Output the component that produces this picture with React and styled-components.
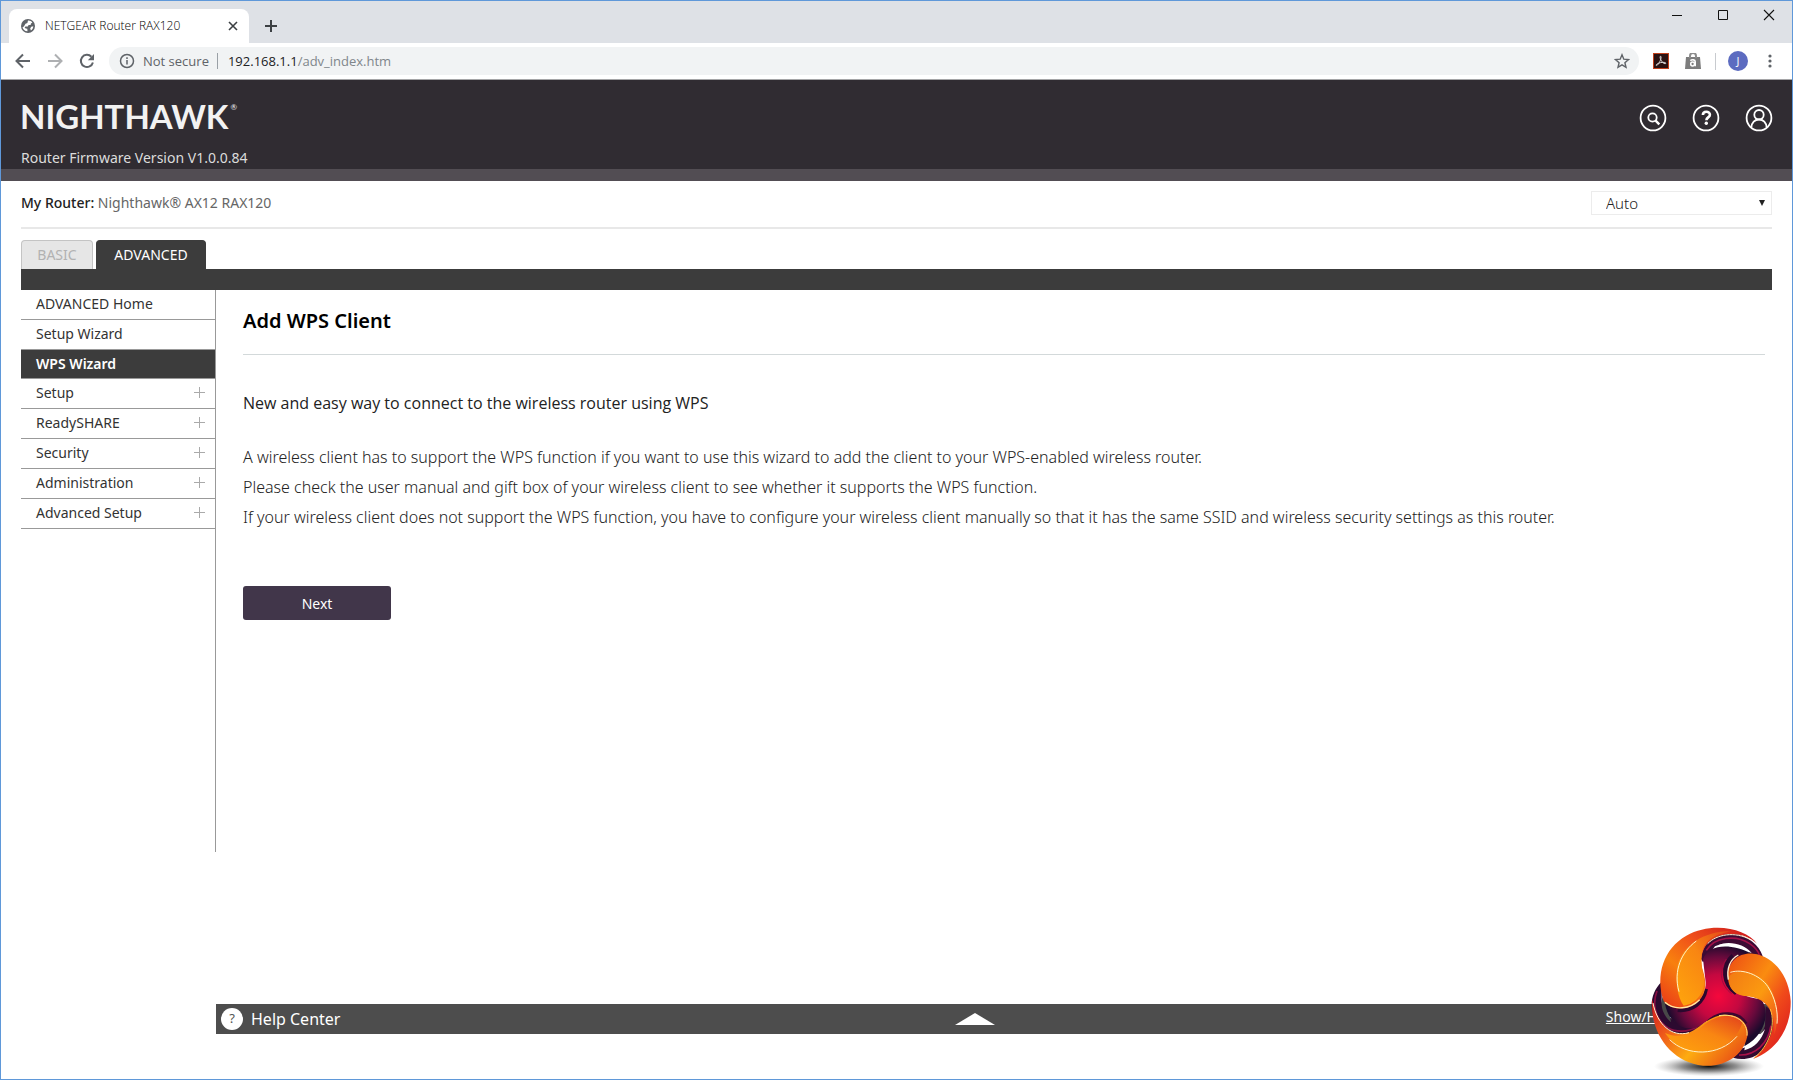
import React from "react";
import styled, { createGlobalStyle } from "styled-components";

const GlobalStyle = createGlobalStyle`
	* { box-sizing: border-box; }
	body { margin: 0; }
	button, select, input { font-family: inherit; }
	svg { display: block; flex: none; }
`

const Window = styled.div`
	position: relative;
	display: flex;
	flex-direction: column;
	min-height: 100vh;
	border: 1px solid #5f98d9;
	background: #fff;
	color: #333;
	font-family: "Noto Sans", sans-serif;
	font-size: 14px;
	overflow: hidden;
`

/* browser frame */
const TabStrip = styled.div`
	display: flex;
	height: 42px;
	padding: 8px 0 0 8px;
	background: #dee1e6;
`
const BrowserTab = styled.div`
	display: flex;
	align-items: center;
	width: 240px;
	padding: 0 11px;
	border-radius: 8px 8px 0 0;
	background: #fff;
	color: #3c4043;
	font-family: "Open Sans", sans-serif;
	font-size: 12px;
	font-weight: 300;
`
const TabTitle = styled.span`
	flex: 1;
	padding: 0 0 2px 9px;
	color: #000;
`
const IconButton = styled.button`
	display: flex;
	align-items: center;
	justify-content: center;
	width: ${p => p.$size || 16}px;
	height: ${p => p.$size || 16}px;
	padding: 0;
	border: none;
	background: none;
	color: inherit;
`
const NewTab = styled(IconButton)`
	width: 28px;
	height: 34px;
	margin-left: 8px;
	color: #3c4043;
`
const WindowButtons = styled.div`
	display: flex;
	gap: 30px;
	height: 16px;
	margin: -2px 15px 0 auto;
	color: #111;
`
const Toolbar = styled.div`
	display: flex;
	align-items: center;
	height: 37px;
	padding: 0 14px 0 13px;
	border-bottom: 1px solid #a5a5a7;
	color: #5f6368;
`
const NavButtons = styled.div`
	display: flex;
	gap: 14px;
	margin-right: 13px;
`
const AddressBar = styled.div`
	display: flex;
	flex: 1;
	align-items: center;
	height: 28px;
	padding: 0 9px 0 10px;
	border-radius: 14px;
	background: #f1f3f4;
	font-family: "Open Sans", sans-serif;
	font-size: 13px;
`
const NotSecure = styled.span`
	padding: 0 8px;
	border-right: 1px solid #9aa0a6;
	line-height: 16px;
`
const Address = styled.span`
	flex: 1;
	padding-left: 10px;
	color: #80868b;

	b {
		color: #202124;
		font-weight: 400;
	}
`
const Extensions = styled.div`
	display: flex;
	align-items: center;
	gap: 16px;
	padding: 0 12px 0 14px;
`
const Separator = styled.span`
	width: 1px;
	height: 17px;
	margin-left: -2px;
	background: #c8cbcf;
`
const Avatar = styled.button`
	width: 20px;
	height: 20px;
	margin-right: 14px;
	padding: 0;
	border: none;
	border-radius: 50%;
	background: #5c6bc0;
	color: #fff;
	font-family: "Open Sans", sans-serif;
	font-size: 11px;
	line-height: 20px;
`

/* router page */
const Header = styled.header`
	display: flex;
	justify-content: space-between;
	padding: 16px 19px 0 20px;
	height: 101px;
	border-bottom: 12px solid #524d53;
	background: #302c32;
`
const Logo = styled.div`
	display: flex;
	margin-left: -1px;
	color: #f2f2f2;
	font-family: Lato, sans-serif;
	font-size: 33px;
	font-weight: 700;
	line-height: 40px;

	sup {
		margin-left: 2px;
		font-size: 8px;
		font-weight: 400;
		line-height: 22px;
	}
`
const Firmware = styled.div`
	margin-top: 12px;
	color: #dcdcdc;
	line-height: 20px;
`
const HeaderIcons = styled.nav`
	display: flex;
	gap: 25px;
	padding-top: 8px;
	color: #fff;
`
const RouterBar = styled.div`
	display: flex;
	align-items: center;
	justify-content: space-between;
	height: 48px;
	margin: 0 20px;
	padding-bottom: 2px;
	border-bottom: 2px solid #e8e8e8;
`
const RouterName = styled.div`
	padding-bottom: 2px;
	color: #666;

	b {
		color: #222;
		font-weight: 500;
	}
`
const SelectBox = styled.label`
	position: relative;
	width: 181px;

	svg {
		position: absolute;
		top: 9px;
		right: 7px;
		pointer-events: none;
	}
`
const Select = styled.select`
	width: 100%;
	height: 24px;
	padding: 0 14px;
	border: 1px solid #ececec;
	border-radius: 0;
	appearance: none;
	background: #fff;
	color: #222;
	font-size: 15px;
	font-weight: 300;
`
const Tabs = styled.div`
	display: grid;
	grid-template-columns: 72px 110px;
	gap: 3px;
	margin: 11px 20px 0;
	border-bottom: 21px solid #3c3c3c;
`
const Tab = styled.button`
	height: 29px;
	padding: 0 0 2px;
	border: 1px solid ${p => p.$active ? "#3c3c3c" : "#c4c4c4"};
	border-bottom: none;
	border-radius: 4px 4px 0 0;
	background: ${p => p.$active ? "#3c3c3c" : "#e6e6e6"};
	color: ${p => p.$active ? "#fff" : "#b2b2b2"};
	font-size: 14px;
`
const Body = styled.div`
	display: flex;
	margin: 0 20px;
`
const Sidebar = styled.nav`
	width: 195px;
	min-height: 562px;
	border-right: 1px solid #999;
`
const MenuItem = styled.a`
	display: flex;
	align-items: center;
	justify-content: space-between;
	height: ${p => p.$active ? 29 : 30}px;
	padding: 0 10px 2px 15px;
	border-bottom: 1px solid #999;
	background: ${p => p.$active ? "#3c3c3c" : "none"};
	color: ${p => p.$active ? "#fff" : "#333"};
	font-weight: ${p => p.$active ? 600 : 400};
	text-decoration: none;
`
const Content = styled.main`
	flex: 1;
	padding: 0 7px 0 27px;
`
const Title = styled.h1`
	margin: 0;
	padding: 16px 0 18px;
	border-bottom: 1px solid #d3d9da;
	color: #000;
	font-size: 20px;
	font-weight: 600;
	line-height: 30px;
`
const Subtitle = styled.h2`
	margin: 33px 0 24px;
	color: #222;
	font-family: "Open Sans", sans-serif;
	font-size: 16px;
	font-weight: 400;
	line-height: 30px;
`
const Text = styled.p`
	margin: 0;
	color: #222;
	font-size: 16px;
	font-weight: 300;
	line-height: 30px;
`
const NextButton = styled.button`
	width: 148px;
	height: 34px;
	margin-top: 54px;
	border: none;
	border-radius: 3px;
	background: #41364a;
	color: #fff;
	font-size: 14px;
`
const HelpBar = styled.footer`
	display: grid;
	grid-template-columns: 19fr auto 20fr;
	align-items: center;
	height: 30px;
	margin: auto 20px 45px 215px;
	padding: 0 5px;
	background: #4d4d4d;
	color: #fff;
`
const HelpCenter = styled.a`
	display: flex;
	align-items: center;
	gap: 8px;
	color: #fff;
	font-size: 16px;
	line-height: 22px;
	text-decoration: none;
`
const HelpMark = styled.span`
	width: 22px;
	height: 22px;
	border-radius: 50%;
	background: #fff;
	color: #555;
	font-size: 13px;
	line-height: 21px;
	text-align: center;
`
const ShowHide = styled.a`
	justify-self: end;
	padding: 0 8px 5px 0;
	color: #fff;
`
const Badge = styled.div`
	position: absolute;
	right: 0;
	bottom: 0;
`

const menu = [
	{ name: "ADVANCED Home" },
	{ name: "Setup Wizard" },
	{ name: "WPS Wizard", active: true },
	{ name: "Setup", more: true },
	{ name: "ReadySHARE", more: true },
	{ name: "Security", more: true },
	{ name: "Administration", more: true },
	{ name: "Advanced Setup", more: true },
];

function Icon({ size = 16, width = 2, children, ...rest }){
	return(
		<svg width={size} height={size} viewBox={`0 0 ${size} ${size}`} fill="none" stroke="currentColor" strokeWidth={width} {...rest}>
			{children}
		</svg>
	);
}

function BrowserBar(){
	return(
		<>
			<TabStrip>
				<BrowserTab>
					<Icon stroke="none">
						<circle cx="8" cy="8" r="7" fill="#5f6368" />
						<path d="M8 2.6c1.6-.3 3.6.7 4.4 2L11 5.4l-.4 1.5-2 .2-.8 1.5-2.3-.2-.9.8 1 1.3 1.7.3.2 2.4c-2.5.1-4.6-1.8-5-4l1.4-.8 1.6-2.6 1.9-.7zM13.3 8.2c0 1.8-1 3.4-2.4 4.2l-.7-1.8 1-1.9z" fill="#fff" />
					</Icon>
					<TabTitle>NETGEAR Router RAX120</TabTitle>
					<IconButton aria-label="Close tab" $size={10}>
						<Icon size={10} width={1.6}><path d="M1 1l8 8M9 1l-8 8" /></Icon>
					</IconButton>
				</BrowserTab>
				<NewTab aria-label="New tab">
					<Icon size={12}><path d="M6 0v12M0 6h12" /></Icon>
				</NewTab>
				<WindowButtons>
					<IconButton aria-label="Minimize"><Icon width={1}><path d="M3 8.5h10" /></Icon></IconButton>
					<IconButton aria-label="Maximize"><Icon width={1}><path d="M3.500 3.500h9v9h-9z" /></Icon></IconButton>
					<IconButton aria-label="Close"><Icon width={1.1}><path d="M3 3l10 10M13 3L3 13" /></Icon></IconButton>
				</WindowButtons>
			</TabStrip>
			<Toolbar>
				<NavButtons>
					<IconButton aria-label="Back" $size={18}>
						<Icon size={18}><path d="M16 9H3M9 2.500L2.500 9 9 15.500" /></Icon>
					</IconButton>
					<IconButton aria-label="Forward" $size={18}>
						<Icon size={18} opacity="0.5"><path d="M2 9h13M9 2.500L15.500 9 9 15.500" /></Icon>
					</IconButton>
					<IconButton aria-label="Reload" $size={18}>
						<Icon size={18}>
							<path d="M14.900 10.500A6.100 6.100 0 1 1 13.400 4.700" />
							<path d="M16 2v6.200H9.800z" fill="currentColor" stroke="none" />
						</Icon>
					</IconButton>
				</NavButtons>
				<AddressBar>
					<Icon width={1.5}>
						<circle cx="8" cy="8" r="6.500" />
						<path d="M8 7v4.500M8 4.300v1.600" />
					</Icon>
					<NotSecure>Not secure</NotSecure>
					<Address><b>192.168.1.1</b>/adv_index.htm</Address>
					<IconButton aria-label="Bookmark">
						<Icon width={1.4}><path d="M8 1.800l1.800 4.400 4.700.4-3.600 3.100 1.100 4.600L8 11.800l-4 2.500 1.100-4.600L1.500 6.600l4.700-.4z" /></Icon>
					</IconButton>
				</AddressBar>
				<Extensions>
					<Icon width={1}>
						<rect x=".5" y=".5" width="15" height="15" fill="#2a1212" stroke="#c0401c" />
						<path d="M7.300 3.300c1-.4 1 1.400.3 3.400C6.800 9 4.600 12.700 3.400 12.500c-1-.5 1.200-2.300 4.200-2.900 3-.6 5.600-.2 5.200.8-.5 1-3-.4-4.300-2.300C7.400 6.400 6.700 3.800 7.300 3.300z" stroke="#ddd" />
					</Icon>
					<Icon stroke="none">
						<path d="M1 4h14l1 12H0z" fill="#7d7d7d" />
						<path d="M5 5V3a3 3 0 0 1 6 0v2" stroke="#8d8d8d" />
						<path d="M5.300 7.600c1.600-1.200 4.900-1.200 4.900 1.200v4.500" stroke="#fff" strokeWidth="1.600" />
						<circle cx="7.600" cy="11" r="1.900" stroke="#fff" strokeWidth="1.500" />
					</Icon>
					<Separator />
				</Extensions>
				<Avatar aria-label="Profile">J</Avatar>
				<IconButton aria-label="Menu">
					<Icon stroke="none">
						<g fill="#5f6368"><circle cx="8" cy="3" r="1.600" /><circle cx="8" cy="8" r="1.600" /><circle cx="8" cy="13" r="1.600" /></g>
					</Icon>
				</IconButton>
			</Toolbar>
		</>
	);
}

function KnotBadge(){
	return(
		<Badge>
			<svg width="163" height="170" viewBox="0 0 489 510">
				<defs>
					<radialGradient id="core" gradientUnits="userSpaceOnUse" cx="268" cy="262" r="165">
						<stop offset="0" stopColor="#f5083c" />
						<stop offset=".4" stopColor="#c40840" />
						<stop offset=".72" stopColor="#680a3c" />
						<stop offset=".95" stopColor="#1c0a2c" />
					</radialGradient>
					<radialGradient id="shade">
						<stop offset="0" stopColor="#000" stopOpacity=".95" />
						<stop offset=".5" stopColor="#222" stopOpacity=".5" />
						<stop offset="1" stopColor="#888" stopOpacity="0" />
					</radialGradient>
					<linearGradient id="top" x1="0" y1="1" x2="1" y2="0">
						<stop offset="0" stopColor="#e83418" />
						<stop offset=".35" stopColor="#f8800e" />
						<stop offset=".6" stopColor="#f0501a" />
						<stop offset="1" stopColor="#c8101e" />
					</linearGradient>
					<linearGradient id="side" x1="0" y1="0" x2=".9" y2="1">
						<stop offset="0" stopColor="#ec4a14" />
						<stop offset=".4" stopColor="#fa8c10" />
						<stop offset=".65" stopColor="#f04a1a" />
						<stop offset="1" stopColor="#d81420" />
					</linearGradient>
					<linearGradient id="base" x1="0" y1="0" x2="1" y2=".6">
						<stop offset="0" stopColor="#d01420" />
						<stop offset=".35" stopColor="#f0601a" />
						<stop offset=".65" stopColor="#fdac10" />
						<stop offset="1" stopColor="#ec5c14" />
					</linearGradient>
					<linearGradient id="petal" x1="0" y1="1" x2="1" y2="0">
						<stop offset="0" stopColor="#ffa60c" />
						<stop offset=".55" stopColor="#f98612" />
						<stop offset="1" stopColor="#e2401c" />
					</linearGradient>
					<linearGradient id="petalSide" x1="1" y1="1" x2="0" y2="0">
						<stop offset="0" stopColor="#ee4a1c" />
						<stop offset=".5" stopColor="#fb9a10" />
						<stop offset="1" stopColor="#f27a14" />
					</linearGradient>
				</defs>
				<ellipse cx="240" cy="472" rx="165" ry="30" fill="url(#shade)" />

				{/* dark loops behind the petals */}
				<path d="M216 150C222 84 284 62 334 78C372 92 398 120 403 150L368 138C340 104 290 96 258 112L222 160z" fill="#3c0a34" />
				<path d="M232 124C256 84 320 76 362 104C380 116 388 128 392 140" fill="none" stroke="#a01048" strokeWidth="5" />
				<path d="M268 108C298 94 346 104 368 132C336 122 306 112 268 108z" fill="#fff" />
				<path d="M98 218C60 254 58 316 92 352C120 386 176 388 220 352L150 345C120 330 96 300 98 268z" fill="#2c0a30" />
				<path d="M84 246C68 288 80 332 116 356C140 370 176 370 204 354" fill="none" stroke="#8a1044" strokeWidth="5" />
				<path d="M101 262C92 290 102 320 126 340L116 290z" fill="#484848" />
				<path d="M312 446C362 462 424 430 436 366C442 334 428 300 410 292L408 350C396 388 368 410 340 418z" fill="#320a30" />
				<path d="M330 438C378 440 418 404 426 350" fill="none" stroke="#a81048" strokeWidth="5" />
				<path d="M346 424C376 416 398 394 408 360C394 380 366 396 350 402z" fill="#fff" />

				{/* three armed centre */}
				<path d="M222 150C240 104 306 102 368 134L304 170C286 222 320 264 396 270C424 306 412 376 346 412L352 360C330 316 270 306 214 350C170 374 118 344 108 284C180 316 232 270 230 220z" fill="url(#core)" />
				<path d="M312 140C278 170 282 226 322 252" fill="none" stroke="#2a082e" strokeWidth="14" />
				<path d="M292 150C266 186 276 232 308 254" fill="none" stroke="#a00c40" strokeWidth="3" />
				<path d="M232 240C224 282 190 308 146 304" fill="none" stroke="#2a082e" strokeWidth="10" />
				<path d="M236 338C270 304 330 306 352 344" fill="none" stroke="#3a0830" strokeWidth="8" />

				{/* top petal */}
				<path d="M384 104C352 58 250 36 172 80C104 118 78 198 104 276C124 306 178 304 208 276C234 252 232 218 222 186C208 136 226 92 280 78C322 68 362 82 384 104z" fill="url(#top)" />
				<path d="M306 66C222 66 160 112 146 170C138 220 146 264 164 290C202 284 232 250 224 200C208 140 218 94 272 76C292 70 300 68 306 66z" fill="url(#petal)" />
				<path d="M202 96C158 128 132 184 150 248" fill="none" stroke="#fff3c8" strokeWidth="3" />
				<path d="M108 280C136 306 184 300 212 272" fill="none" stroke="#ffe9a0" strokeWidth="4" />
				<path d="M236 104C262 76 318 66 364 92" fill="none" stroke="#fff3d0" strokeWidth="3" />

				{/* right petal */}
				<path d="M298 216C290 164 324 130 372 134C438 140 482 208 485 276C487 352 446 424 372 450C416 416 438 366 430 322C420 278 382 262 346 260C320 256 302 242 298 216z" fill="url(#side)" />
				<path d="M300 204C316 176 372 184 408 216C440 250 456 316 436 376C440 306 414 268 362 262C322 262 298 244 300 204z" fill="url(#petalSide)" />
				<path d="M304 190C342 178 392 198 416 232C438 266 448 306 444 344" fill="none" stroke="#fff3c8" strokeWidth="3" />
				<path d="M298 212C292 178 304 150 328 138" fill="none" stroke="#fff3d0" strokeWidth="4" />
				<path d="M424 300C442 350 418 414 376 446" fill="none" stroke="#ffc040" strokeWidth="3" />

				{/* bottom petal */}
				<path d="M70 270C60 372 128 460 222 470C292 476 350 432 356 374C358 338 324 314 280 318C238 324 216 354 182 370C130 388 84 350 70 270z" fill="url(#base)" />
				<path d="M108 372C150 390 190 378 220 352C258 316 320 308 340 340C328 390 274 430 214 430C170 430 132 408 108 372z" fill="url(#petal)" />
				<path d="M122 392C172 442 270 444 324 382" fill="none" stroke="#fff3c8" strokeWidth="3" />
				<path d="M72 282C84 346 128 386 180 371" fill="none" stroke="#fff3d0" strokeWidth="3" />
				<path d="M270 320C320 312 358 340 354 380" fill="none" stroke="#ffe080" strokeWidth="3" />
			</svg>
		</Badge>
	);
}

function App(){
	return(
		<Window>
			<GlobalStyle />
			<BrowserBar />
			<Header>
				<div>
					<Logo>NIGHTHAWK<sup>®</sup></Logo>
					<Firmware>Router Firmware Version V1.0.0.84</Firmware>
				</div>
				<HeaderIcons>
					<IconButton aria-label="Search" $size={28}>
						<Icon size={28} width={1.8}>
							<circle cx="14" cy="14" r="12.400" />
							<circle cx="13.500" cy="13.500" r="4.200" />
							<path d="M16.600 16.600l3.700 3.700" strokeWidth="2.400" />
						</Icon>
					</IconButton>
					<IconButton aria-label="Help" $size={28}>
						<Icon size={28} width={1.8}>
							<circle cx="14" cy="14" r="12.400" />
							<path d="M10.900 11c0-4.200 7-4.200 7-.3 0 2.800-3.500 2.600-3.500 5.600" strokeWidth="2.600" />
							<circle cx="14.300" cy="19.300" r="1.700" fill="currentColor" stroke="none" />
						</Icon>
					</IconButton>
					<IconButton aria-label="Account" $size={28}>
						<Icon size={28} width={1.8}>
							<circle cx="14" cy="14" r="12.400" />
							<circle cx="14" cy="10.700" r="4.700" />
							<path d="M6.400 23.500c.2-4.800 3.400-8 7.600-8s7.400 3.200 7.600 8" />
						</Icon>
					</IconButton>
				</HeaderIcons>
			</Header>
			<RouterBar>
				<RouterName><b>My Router:</b> Nighthawk® AX12 RAX120</RouterName>
				<SelectBox>
					<Select aria-label="Language">
						<option>Auto</option>
					</Select>
					<svg width="6" height="6" viewBox="0 0 6 6"><path d="M0 0h6L3 6z" fill="#222" /></svg>
				</SelectBox>
			</RouterBar>
			<Tabs>
				<Tab>BASIC</Tab>
				<Tab $active>ADVANCED</Tab>
			</Tabs>
			<Body>
				<Sidebar>
					{menu.map(item => (
						<MenuItem key={item.name} href="#" $active={item.active}>
							{item.name}
							{item.more && <Icon size={11} width={1} color="#aaa"><path d="M5.500 0v11M0 5.500h11" /></Icon>}
						</MenuItem>
					))}
				</Sidebar>
				<Content>
					<Title>Add WPS Client</Title>
					<Subtitle>New and easy way to connect to the wireless router using WPS</Subtitle>
					<Text>A wireless client has to support the WPS function if you want to use this wizard to add the client to your WPS-enabled wireless router.</Text>
					<Text>Please check the user manual and gift box of your wireless client to see whether it supports the WPS function.</Text>
					<Text>If your wireless client does not support the WPS function, you have to configure your wireless client manually so that it has the same SSID and wireless security settings as this router.</Text>
					<NextButton>Next</NextButton>
				</Content>
			</Body>
			<HelpBar>
				<HelpCenter href="#"><HelpMark>?</HelpMark>Help Center</HelpCenter>
				<svg width="40" height="12" viewBox="0 0 40 12"><path d="M0 12L20 0l20 12z" fill="#fff" /></svg>
				<ShowHide href="#">Show/Hide Help Center</ShowHide>
			</HelpBar>
			<KnotBadge />
		</Window>
	);
}
export default App;
